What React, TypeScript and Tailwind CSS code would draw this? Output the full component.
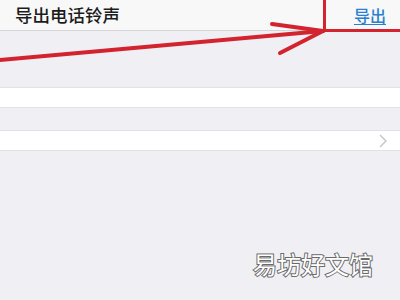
import React from "react";

export default function App() {
  return (
    <div className="relative w-[400px] h-[300px] overflow-hidden bg-[#efeff4]" style={{ fontFamily: '"Noto Sans CJK SC", "Noto Sans", sans-serif' }}>
      <div className="h-[31px] bg-[#f8f8f8] border-b border-[#d6d6da] flex items-center justify-between pl-[15px] pr-[14px]">
        <span className="text-[17.5px] leading-none text-[#1c1c1c] font-medium">导出电话铃声</span>
        <span className="text-[16px] leading-none text-[#2a7fd0] font-medium underline underline-offset-2">导出</span>
      </div>
      <div className="h-[56px]" />
      <div className="h-[21px] bg-white border-y border-[#e2e2e6]" />
      <div className="h-[22px]" />
      <div className="h-[21px] bg-white border-y border-[#e2e2e6] flex items-center justify-end pr-[13px]">
        <svg width="8" height="14" viewBox="0 0 8 14" fill="none">
          <path d="M1 1l6 6-6 6" stroke="#c7c7cc" strokeWidth="1.5" />
        </svg>
      </div>

      <div className="absolute left-[323px] top-[-3px] w-[80px] h-[35px] border-[3px] border-[#d3232e]" />
      <svg className="absolute left-0 top-0" width="400" height="300" viewBox="0 0 400 300" fill="none">
        <path d="M-5 60.5L323 31" stroke="#d3232e" strokeWidth="4" strokeLinecap="round" />
        <path d="M272 24L323 31" stroke="#d3232e" strokeWidth="4" strokeLinecap="round" />
        <path d="M280 53L323 31" stroke="#d3232e" strokeWidth="4" strokeLinecap="round" />
      </svg>

      <div className="absolute left-[253px] top-[252px] text-[24px] leading-none text-white [-webkit-text-stroke:2px_#6a6a6a] [paint-order:stroke_fill]">易坊好文馆</div>
    </div>
  );
}
